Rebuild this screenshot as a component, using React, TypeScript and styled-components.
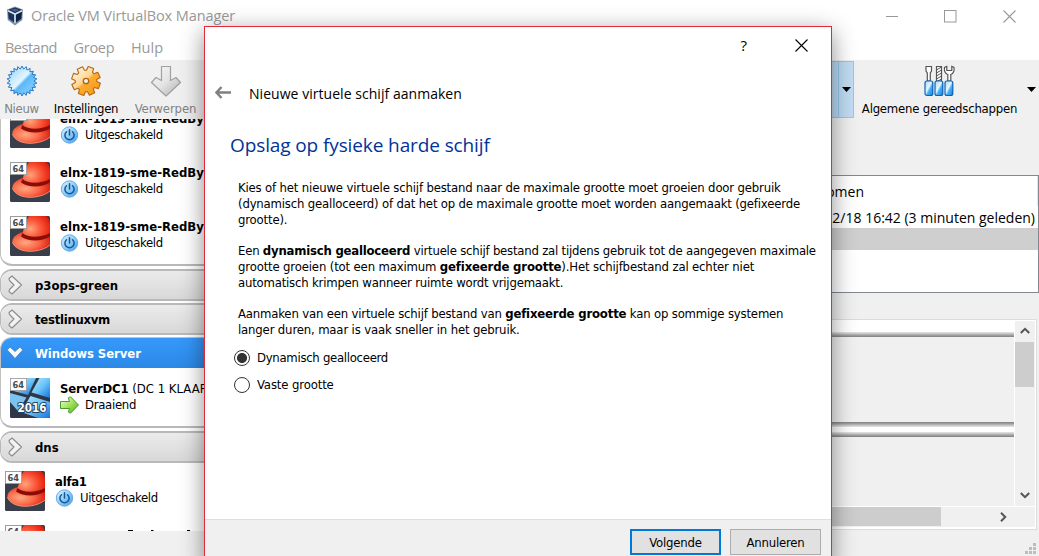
import React from "react";
import styled, { createGlobalStyle } from "styled-components";

const tahoma = `"DejaVu Sans Condensed", "DejaVu Sans", sans-serif`;
const segoe = `"Open Sans", "Noto Sans", sans-serif`;

const GlobalStyle = createGlobalStyle`
  * { box-sizing: border-box; }
  body { margin: 0; overflow: hidden; background: #f0f0f0; }
  svg { display: block; flex: none; }
`;

const Track = styled.span<{ $ls?: number }>`
  letter-spacing: ${(p) => p.$ls ?? 0}px;
  white-space: nowrap;
`;

const Desktop = styled.div`
  position: relative;
  display: flex;
  flex-direction: column;
  width: 1039px;
  height: 556px;
  overflow: hidden;
  background: #f0f0f0;
  font: 13px/16px ${tahoma};
  color: #000;
`;

const TitleBar = styled.header`
  display: flex;
  align-items: center;
  height: 38px;
  padding: 0 23px 6px 6px;
  background: #fff;
  color: #999;
  font: 14.5px/20px ${segoe};
`;

const WindowTitle = styled.div`
  flex: 1;
  padding-left: 7px;
`;

const Controls = styled.div`
  display: flex;
  gap: 46px;
`;

const MenuBar = styled.nav`
  display: flex;
  gap: 16.5px;
  height: 22px;
  padding-left: 5px;
  background: #fff;
  color: #999;
  font: 14.5px/20px ${segoe};
`;

const ToolBar = styled.div`
  display: flex;
  height: 59px;
  background: #f0f0f0;
`;

const Tool = styled.div<{ $w: number; $muted?: boolean }>`
  display: flex;
  flex-direction: column;
  align-items: center;
  gap: 4px;
  width: ${(p) => p.$w}px;
  padding-top: 5px;
  color: ${(p) => (p.$muted ? "#838383" : "#000")};
`;

const RightTools = styled.div`
  display: flex;
  margin-left: auto;
`;

const ActiveTool = styled.div`
  display: flex;
  align-items: center;
  justify-content: flex-end;
  width: 60px;
  height: 57px;
  margin: 1px 1px 0 0;
  border: 1px solid #90c8f6;
  background: #c0dcf3;
`;

const DropCell = styled.div`
  display: flex;
  align-items: center;
  justify-content: center;
  width: 15px;
  height: 100%;
  border-left: 1px solid #90c8f6;
`;

const Drop = styled.div`
  display: flex;
  align-items: center;
  justify-content: center;
  width: 15px;
`;

const Body = styled.div`
  display: flex;
  flex: 1;
  min-height: 0;
`;

const Sidebar = styled.aside`
  display: flex;
  flex-direction: column;
  width: 300px;
  height: 412px;
  overflow: hidden;
  background: #fff;
`;

const Group = styled.section<{ $h: number }>`
  flex: none;
  height: ${(p) => p.$h}px;
  margin-bottom: 3px;
  border: 1px solid #c2c2c2;
  border-bottom: 2px solid #b9b9b9;
  border-radius: 12px 0 0 12px;
  overflow: hidden;
  background: #fff;
`;

const PartialGroup = styled(Group)`
  display: flex;
  flex-direction: column;
  justify-content: flex-end;
  border-top: 0;
  border-radius: 0 0 0 12px;
  padding-bottom: 1px;
`;

const GroupHeader = styled.div<{ $active?: boolean }>`
  display: flex;
  align-items: center;
  flex: none;
  height: ${(p) => (p.$active ? 30 : 28)}px;
  padding: 0 0 0 6px;
  background: ${(p) =>
    p.$active
      ? "linear-gradient(#3699fb, #2b88e6)"
      : "linear-gradient(#ebebeb, #d8d8d8)"};
  color: ${(p) => (p.$active ? "#fff" : "#000")};
  font-weight: bold;
`;

const ClosedGroup = styled.section`
  flex: none;
  height: 32px;
  margin-bottom: 2px;
  border: 2px solid #b9b9b9;
  border-left-width: 1px;
  border-radius: 12px 0 0 12px;
  overflow: hidden;
`;

const GroupName = styled.div<{ $ls?: number }>`
  padding: 1px 0 0 12px;
  letter-spacing: ${(p) => p.$ls ?? 0}px;
`;

const MachineRow = styled.div<{ $indent: number; $top?: number }>`
  display: flex;
  flex: none;
  gap: 10px;
  height: 54px;
  padding: ${(p) => p.$top ?? 7}px 0 0 ${(p) => p.$indent}px;
`;

const MachineInfo = styled.div`
  padding-top: 3px;
  white-space: nowrap;
`;

const MachineName = styled.div`
  height: 15px;
`;

const MachineState = styled.div`
  display: flex;
  align-items: center;
  gap: 6px;
  height: 18px;
`;

const Details = styled.main`
  display: flex;
  flex-direction: column;
  flex: 1;
  padding-top: 56px;
`;

const Snapshots = styled.div`
  height: 118px;
  border: 1px solid #828790;
  background: #fff;
  font: 14px/26px ${segoe};
  text-align: right;
`;

const SnapHead = styled.div`
  height: 30px;
  padding: 3px 173px 0 0;
  border-right: 1px solid #e5e5e5;
`;

const SnapRow = styled.div<{ $selected?: boolean }>`
  height: 22px;
  padding-right: 3px;
  line-height: 24px;
  background: ${(p) => (p.$selected ? "#cfcfcf" : "#fff")};
`;

const Panel = styled.div`
  display: grid;
  grid-template-columns: 1fr 20px;
  grid-template-rows: 185px 20px;
  column-gap: 1px;
  row-gap: 1px;
  height: 211px;
  margin: 26px 2px 0 0;
  padding: 1px;
  border: 1px solid #dcdcdc;
  background: #fff;
`;

const View = styled.div`
  display: flex;
  flex-direction: column;
  gap: 85px;
  background: #f0f0f0;
`;

const bottomEdge = "linear-gradient(#e8e8e8, #c8c8c8 30%, #a0a0a0 65%, #808080) bottom / 100% 5px no-repeat,";
const topEdge = "linear-gradient(#808080, #a0a0a0 35%, #c8c8c8 70%, #e8e8e8) top / 100% 5px no-repeat,";

const Divider = styled.div<{ $h: number; $double?: boolean }>`
  height: ${(p) => p.$h}px;
  background: ${bottomEdge} ${(p) => (p.$double ? topEdge : "")} #fff;
`;

const VScroll = styled.div`
  display: flex;
  flex-direction: column;
  align-items: center;
  justify-content: space-between;
  background: #f0f0f0;
  padding: 5px 0 6px;
`;

const VThumb = styled.div`
  width: 19px;
  height: 45px;
  margin: 6px 1px auto 0;
  background: #cdcdcd;
`;

const HScroll = styled.div`
  display: flex;
  align-items: center;
  grid-column: 1 / 3;
  padding-right: 27px;
  background: #f0f0f0;
`;

const HThumb = styled.div`
  flex: 1;
  height: 19px;
  margin: 0 57px 1px 0;
  background: #cdcdcd;
`;

const GripCorner = styled.div`
  display: flex;
  justify-content: flex-end;
  padding: 13px 3px 0 0;
`;

const Dialog = styled.section`
  position: absolute;
  left: 204px;
  top: 26px;
  display: flex;
  flex-direction: column;
  width: 628px;
  height: 540px;
  border: 1px solid #e3283a;
  background: #fff;
  box-shadow: 0 6px 22px rgba(0, 0, 0, 0.45);
`;

const DialogControls = styled.div`
  display: flex;
  align-items: center;
  justify-content: flex-end;
  gap: 48px;
  height: 36px;
  padding-right: 23px;
  font: 500 15px/20px ${segoe};
`;

const DialogHeading = styled.div`
  display: flex;
  align-items: center;
  gap: 18px;
  height: 60px;
  padding: 2px 0 0 10px;
  font: 14px/20px ${segoe};
`;

const BackArrow = styled.svg`
  margin-bottom: 3px;
`;

const PageTitle = styled.h1`
  height: 44px;
  margin: 0;
  padding-left: 25px;
  color: #003399;
  font: 400 19px/44px ${segoe};
`;

const Copy = styled.div`
  padding: 13px 0 0 33px;
  line-height: 15.75px;
`;

const Paragraph = styled.p`
  margin: 0 0 15.75px;
`;

const Line = styled(Track)`
  display: block;
`;

const Choice = styled.label`
  display: flex;
  align-items: center;
  gap: 7px;
  height: 27px;
  padding-left: 29px;
`;

const Radio = styled.span<{ $on?: boolean }>`
  width: 16px;
  height: 16px;
  border: 1px solid #333;
  border-radius: 50%;
  background: ${(p) => (p.$on ? "radial-gradient(circle, #333 4.6px, #fff 5.4px)" : "#fff")};
`;

const Choices = styled.div`
  margin-top: -8.5px;
`;

const Footer = styled.footer`
  display: flex;
  justify-content: flex-end;
  gap: 9px;
  height: 46px;
  margin-top: auto;
  padding: 9px 10px 0 0;
  border-top: 1px solid #dfdfdf;
  background: #f0f0f0;
`;

const Button = styled.button<{ $primary?: boolean }>`
  width: 91px;
  height: 26px;
  padding: 1px 0 0;
  border: ${(p) => (p.$primary ? "2px solid #0078d7" : "1px solid #adadad")};
  background: #e1e1e1;
  color: #000;
  font: 13px/20px ${tahoma};
`;

const CloseGlyph = ({ color }: { color: string }) => (
  <svg width="13" height="13" viewBox="0 0 13 13">
    <path d="M.5 .5 12.5 12.5M12.5 .5 .5 12.5" stroke={color} strokeWidth="1.1" fill="none" />
  </svg>
);

const Triangle = () => (
  <svg width="9" height="5" viewBox="0 0 9 5">
    <path d="M0 0H9L4.5 5Z" />
  </svg>
);

const CubeLogo = () => (
  <svg width="18" height="20" viewBox="0 0 18 20">
    <path d="M1 3.5 9 .5 17 3.5 16.3 14 9 19.5 1.7 14Z" fill="#7e92a8" />
    <path d="M2.5 3.8 9 1.5 15.5 3.8 9 7Z" fill="#15294d" />
    <path d="M2 5.3 8 8.3V16.5L2.7 12.8Z" fill="#18325f" />
    <path d="M16 5.3 10 8.3V16.5L15.3 12.8Z" fill="#0e2142" />
    <path d="M2 4.8 9 8.2 16 4.8M9 8V17" stroke="#dbe5ee" strokeWidth="1.3" fill="none" />
    <path d="M4.5 3.9 9 2.4 13.5 3.9 9 5.8Z" fill="#3f5f8e" />
  </svg>
);

const burst = Array.from({ length: 44 }, (_, i) => {
  const r = i % 2 ? 12 : 15;
  const a = (i * Math.PI) / 22;
  return `${(16 + r * Math.sin(a)).toFixed(2)},${(16 - r * Math.cos(a)).toFixed(2)}`;
}).join(" ");

const NewIcon = () => (
  <svg width="32" height="32" viewBox="0 0 32 32">
    <defs>
      <linearGradient id="nw" x1="0" y1="0" x2="1" y2="1">
        <stop offset="0" stopColor="#8fd0ff" />
        <stop offset=".48" stopColor="#e4f6ff" />
        <stop offset=".55" stopColor="#5cb8fa" />
        <stop offset=".8" stopColor="#7accff" />
        <stop offset="1" stopColor="#3f9df0" />
      </linearGradient>
    </defs>
    <polygon points={burst} fill="url(#nw)" stroke="#2877c4" strokeWidth="1" />
  </svg>
);

const gear = Array.from({ length: 8 }, (_, i) => {
  const center = ((i * 45 + 20) * Math.PI) / 180;
  return [[-0.3, 10.8], [-0.2, 14.6], [0.2, 14.6], [0.3, 10.8]]
    .map(([d, r]) => `${(16 + r * Math.sin(center + d)).toFixed(2)},${(16 - r * Math.cos(center + d)).toFixed(2)}`)
    .join(" ");
}).join(" ");

const GearIcon = () => (
  <svg width="32" height="32" viewBox="0 0 32 32">
    <defs>
      <linearGradient id="gr" gradientUnits="userSpaceOnUse" x1="4" y1="3" x2="27" y2="29">
        <stop offset="0" stopColor="#fffaf0" />
        <stop offset=".46" stopColor="#ffd591" />
        <stop offset=".54" stopColor="#fdab30" />
        <stop offset="1" stopColor="#f59a18" />
      </linearGradient>
    </defs>
    <polygon points={gear} fill="url(#gr)" stroke="#b5660f" strokeWidth="1.1" strokeLinejoin="round" />
    <circle cx="16" cy="16" r="2.7" fill="#f5efe4" stroke="#a8651a" strokeWidth="1.3" />
  </svg>
);

const DiscardIcon = () => (
  <svg width="32" height="32" viewBox="0 0 32 32">
    <defs>
      <linearGradient id="dc" x1="0" y1="0" x2="1" y2="1">
        <stop offset="0" stopColor="#fafafa" />
        <stop offset=".5" stopColor="#e4e4e4" />
        <stop offset="1" stopColor="#b0b0b0" />
      </linearGradient>
    </defs>
    <path d="M11.5 1.500H20.500V15.500L26 12.500 30.500 17.500 16 31 1.500 17.500 6 12.500 11.500 15.500Z" fill="url(#dc)" stroke="#a0a0a0" strokeWidth="1.2" strokeLinejoin="round" />
  </svg>
);

const ToolsIcon = () => (
  <svg width="32" height="32" viewBox="0 0 32 32">
    <defs>
      <linearGradient id="tl" x1="0" y1="0" x2="1" y2="1">
        <stop offset="0" stopColor="#9fd8ff" />
        <stop offset=".45" stopColor="#e4f6ff" />
        <stop offset=".6" stopColor="#45b1f8" />
        <stop offset="1" stopColor="#1d84dc" />
      </linearGradient>
    </defs>
    <g fill="#fff" stroke="#555" strokeWidth="1.2">
      <path d="M2 1.500H7.500V6L6.300 8V16H3.300V8L2 6Z" />
      <path d="M12.500 1.500H17.500V16H12.500Z" />
      <path d="M20.500 2.500C20 6 21 8.500 23.800 9.500V16H26.800V9.500C29.500 8.500 30.500 6 30 2.500L27.800 1.500V5.500H22.800V1.500Z" />
      <path d="M12.500 5 17.500 2M12.500 8 17.500 5M12.500 11 17.500 8M12.500 14 17.500 11M14 16 17.500 14" strokeWidth="1" />
    </g>
    {[1, 11, 21].map((x) => (
      <rect key={x} x={x} y="16" width="7.8" height="14.5" rx="2" fill="url(#tl)" stroke="#0f63b5" strokeWidth="1.2" />
    ))}
  </svg>
);

const Badge64 = ({ label = true }: { label?: boolean }) => (
  <g>
    <rect x=".4" y=".4" width="16.2" height="12.2" fill="#fdfdfd" stroke="#999" strokeWidth=".8" />
    {label && (
      <text x="8.3" y="10" textAnchor="middle" fontFamily="DejaVu Sans" fontWeight="bold" fontSize="9" fill="#454b57" textLength="11.5" lengthAdjust="spacingAndGlyphs">64</text>
    )}
  </g>
);

const HatIcon = ({ label }: { label?: boolean }) => (
  <svg width="40" height="40" viewBox="0 0 40 40">
    <defs>
      <radialGradient id="ht" cx=".3" cy=".55" r=".8">
        <stop offset="0" stopColor="#ffa47c" />
        <stop offset=".45" stopColor="#fb5a3c" />
        <stop offset="1" stopColor="#df1405" />
      </radialGradient>
      <radialGradient id="br" cx=".35" cy=".55" r=".7">
        <stop offset="0" stopColor="#ffa882" />
        <stop offset=".5" stopColor="#fb6a4a" />
        <stop offset="1" stopColor="#d81b0b" />
      </radialGradient>
    </defs>
    <rect width="40" height="40" rx="1.5" fill="#393e4b" />
    <path d="M13 16C6 18 2 22 2.500 26 4 32 12 35.500 21 35.300 29 35 36 32.500 40 29V18Z" fill="url(#br)" />
    <path d="M2.500 26C4 32 12 35.500 21 35.300 29 35 36 32.500 40 29" fill="none" stroke="#f9957a" strokeWidth=".9" />
    <path d="M12 19C14 13 16 4 19 0H36C38.500 2 39.500 4 40 7V20C32 25 19 25 12 19Z" fill="url(#ht)" />
    <path d="M12.500 17C18 21.800 30 22.300 40 17V20.500C31 26 18 25.500 11 20.500Z" fill="#8b0d08" />
    <Badge64 label={label} />
  </svg>
);

const WindowsServerIcon = () => (
  <svg width="40" height="40" viewBox="0 0 40 40">
    <defs>
      <linearGradient id="ws" x1="0" y1="0" x2="1" y2="1">
        <stop offset="0" stopColor="#b9e8ff" />
        <stop offset=".5" stopColor="#6cc4f7" />
        <stop offset="1" stopColor="#0f74e2" />
      </linearGradient>
    </defs>
    <rect width="40" height="40" rx="1.5" fill="#2f3747" />
    <path d="M0 0H26L18 17 0 12Z" fill="url(#ws)" />
    <path d="M29.500 0H40V20L21.500 14.500Z" fill="url(#ws)" />
    <path d="M0 15 16.500 19.500 8 33 0 24Z" fill="#7cc4f0" />
    <path d="M20.500 18 40 24V40H28L11 34Z" fill="url(#ws)" />
    <text x="22" y="34" textAnchor="middle" fontFamily="DejaVu Sans" fontWeight="bold" fontSize="12" fill="#fff" stroke="#26405f" strokeWidth="2" paintOrder="stroke" textLength="29" lengthAdjust="spacingAndGlyphs">2016</text>
    <Badge64 />
  </svg>
);

const PowerIcon = () => (
  <svg width="19" height="18" viewBox="0 0 19 18">
    <defs>
      <linearGradient id="pw" x1="0" y1="0" x2="1" y2="1">
        <stop offset="0" stopColor="#e2f4ff" />
        <stop offset=".5" stopColor="#8ccefc" />
        <stop offset="1" stopColor="#3c9df2" />
      </linearGradient>
    </defs>
    <circle cx="9.5" cy="9" r="8.2" fill="url(#pw)" stroke="#5ba5de" strokeWidth=".9" />
    <path d="M6.500 5.700A4.600 4.600 0 1 0 12.500 5.700M9.500 3.800V9" stroke="#1c5590" strokeWidth="1.5" fill="none" strokeLinecap="round" />
  </svg>
);

const RunIcon = () => (
  <svg width="19" height="18" viewBox="0 0 19 18">
    <defs>
      <linearGradient id="rn" x1="0" y1="0" x2="1" y2="1">
        <stop offset="0" stopColor="#f2ffe4" />
        <stop offset=".5" stopColor="#a3e35c" />
        <stop offset="1" stopColor="#42b019" />
      </linearGradient>
    </defs>
    <path d="M.5 5.500H9.500L8.300 1.800 10.500 .8 18.500 9 10.500 17.200 8.300 16 9.500 12.500H.5Z" fill="url(#rn)" stroke="#4d9a2c" strokeWidth="1" strokeLinejoin="round" />
  </svg>
);

const ChevronRight = () => (
  <svg width="16" height="20" viewBox="0 0 16 20">
    <path d="M5 1 14.500 10 5 19 2 16.500 2.500 14.500 7 10 2.500 5.500 2 3.500Z" fill="#f3f3f3" stroke="#8c8c8c" strokeWidth="1.1" strokeLinejoin="round" />
  </svg>
);

const ChevronDown = () => (
  <svg width="16" height="14" viewBox="0 0 16 14">
    <path d="M.3 4 3 1 8 5.500 13 1 15.700 4 8 12.500Z" fill="#f5f8fc" stroke="#4a7fb4" strokeWidth=".8" strokeLinejoin="round" />
  </svg>
);

const ScrollArrow = ({ turn }: { turn: number }) => (
  <svg width="10" height="10" viewBox="0 0 10 10">
    <path d="M.8 7 5 2.800 9.200 7" fill="none" stroke="#555" strokeWidth="2" transform={`rotate(${turn} 5 5)`} />
  </svg>
);

const SizeGrip = () => (
  <svg width="11" height="12" viewBox="0 0 11 12" fill="#bdbdbd">
    {[[8, 0], [4, 4], [8, 4], [0, 8], [4, 8], [8, 8]].map(([x, y]) => (
      <rect key={`${x}-${y}`} x={x} y={y} width="3" height="3" />
    ))}
  </svg>
);

/* Tops of the letters of a name that is scrolled out below the list. */
const NameTops = () => (
  <svg width="140" height="6" viewBox="0 0 140 6">
    <path d="M73 5.500H78M96 5.500H98.500M132 5.500H135" stroke="#000" />
  </svg>
);

type MachineProps = { name: string; indent: number; top?: number; ls?: number; badgeLabel?: boolean };

const StoppedMachine = ({ name, indent, top, ls, badgeLabel }: MachineProps) => (
  <MachineRow $indent={indent} $top={top}>
    <HatIcon label={badgeLabel} />
    <MachineInfo>
      <MachineName><Track as="b" $ls={ls}>{name}</Track></MachineName>
      <MachineState><PowerIcon /><Track $ls={-0.35}>Uitgeschakeld</Track></MachineState>
    </MachineInfo>
  </MachineRow>
);

const CollapsedGroup = ({ name, ls }: { name: string; ls?: number }) => (
  <ClosedGroup>
    <GroupHeader><ChevronRight /><GroupName $ls={ls}>{name}</GroupName></GroupHeader>
  </ClosedGroup>
);

export default function App() {
  return (
    <Desktop>
      <GlobalStyle />
      <TitleBar>
        <CubeLogo />
        <WindowTitle><Track $ls={-0.09}>Oracle VM VirtualBox Manager</Track></WindowTitle>
        <Controls>
          <svg width="12" height="13"><path d="M0 6.500H12" stroke="#999" /></svg>
          <svg width="13" height="13"><rect x=".5" y=".5" width="11.5" height="11.5" fill="none" stroke="#999" /></svg>
          <CloseGlyph color="#999" />
        </Controls>
      </TitleBar>
      <MenuBar>
        <Track $ls={-0.5}>Bestand</Track><Track $ls={-0.25}>Groep</Track><Track>Hulp</Track>
      </MenuBar>
      <ToolBar>
        <Tool $w={43} $muted><NewIcon /><Track $ls={-0.3}>Nieuw</Track></Tool>
        <Tool $w={86}><GearIcon /><Track $ls={-0.3}>Instellingen</Track></Tool>
        <Tool $w={73} $muted><DiscardIcon /><Track $ls={-0.1}>Verwerpen</Track></Tool>
        <RightTools>
          <ActiveTool><DropCell><Triangle /></DropCell></ActiveTool>
          <Tool $w={169}><ToolsIcon /><Track $ls={-0.22}>Algemene gereedschappen</Track></Tool>
          <Drop><Triangle /></Drop>
        </RightTools>
      </ToolBar>
      <Body>
        <Sidebar>
          <PartialGroup $h={147}>
            <StoppedMachine name="elnx-1819-sme-RedByte" indent={9} badgeLabel={false} />
            <StoppedMachine name="elnx-1819-sme-RedByte" indent={9} />
            <StoppedMachine name="elnx-1819-sme-RedByte" indent={9} />
          </PartialGroup>
          <CollapsedGroup name="p3ops-green" />
          <CollapsedGroup name="testlinuxvm" ls={-0.28} />
          <Group $h={91}>
            <GroupHeader $active><ChevronDown /><GroupName $ls={-0.08}>Windows Server</GroupName></GroupHeader>
            <MachineRow $indent={9} $top={10}>
              <WindowsServerIcon />
              <MachineInfo>
                <MachineName><Track as="b" $ls={-0.15}>ServerDC1</Track> (DC 1 KLAAR)</MachineName>
                <MachineState><RunIcon /><Track $ls={-0.3}>Draaiend</Track></MachineState>
              </MachineInfo>
            </MachineRow>
          </Group>
          <CollapsedGroup name="dns" />
          <StoppedMachine name="alfa1" indent={5} top={6} ls={-0.25} />
          <MachineRow $indent={5} $top={6}><HatIcon /><NameTops /></MachineRow>
        </Sidebar>
        <Details>
          <Snapshots>
            <SnapHead><Track>Genomen</Track></SnapHead>
            <SnapRow><Track>2/12/18 16:42 (3 minuten geleden)</Track></SnapRow>
            <SnapRow $selected />
          </Snapshots>
          <Panel>
            <View>
              <Divider $h={16} />
              <Divider $h={15} $double />
            </View>
            <VScroll><ScrollArrow turn={0} /><VThumb /><ScrollArrow turn={180} /></VScroll>
            <HScroll><HThumb /><ScrollArrow turn={90} /></HScroll>
          </Panel>
          <GripCorner><SizeGrip /></GripCorner>
        </Details>
      </Body>
      <Dialog>
        <DialogControls><span>?</span><CloseGlyph color="#000" /></DialogControls>
        <DialogHeading>
          <BackArrow width="16" height="13" viewBox="0 0 16 13">
            <path d="M6.500 1 1.500 6.500 6.500 12M1.500 6.500H16" fill="none" stroke="#808080" strokeWidth="2.4" />
          </BackArrow>
          <Track $ls={0.04}>Nieuwe virtuele schijf aanmaken</Track>
        </DialogHeading>
        <PageTitle><Track $ls={-0.11}>Opslag op fysieke harde schijf</Track></PageTitle>
        <Copy>
          <Paragraph>
            <Line $ls={-0.165}>Kies of het nieuwe virtuele schijf bestand naar de maximale grootte moet groeien door gebruik</Line>
            <Line $ls={-0.18}>(dynamisch gealloceerd) of dat het op de maximale grootte moet worden aangemaakt (gefixeerde</Line>
            <Line $ls={-0.17}>grootte).</Line>
          </Paragraph>
          <Paragraph>
            <Line $ls={-0.215}>Een <b>dynamisch gealloceerd</b> virtuele schijf bestand zal tijdens gebruik tot de aangegeven maximale</Line>
            <Line $ls={-0.155}>grootte groeien (tot een maximum <b>gefixeerde grootte</b>).Het schijfbestand zal echter niet</Line>
            <Line $ls={-0.2}>automatisch krimpen wanneer ruimte wordt vrijgemaakt.</Line>
          </Paragraph>
          <Paragraph>
            <Line $ls={-0.18}>Aanmaken van een virtuele schijf bestand van <b>gefixeerde grootte</b> kan op sommige systemen</Line>
            <Line $ls={-0.16}>langer duren, maar is vaak sneller in het gebruik.</Line>
          </Paragraph>
        </Copy>
        <Choices>
          <Choice><Radio $on /><Track $ls={-0.29}>Dynamisch gealloceerd</Track></Choice>
          <Choice><Radio /><Track $ls={-0.13}>Vaste grootte</Track></Choice>
        </Choices>
        <Footer>
          <Button $primary><Track $ls={-0.2}>Volgende</Track></Button>
          <Button><Track $ls={-0.2}>Annuleren</Track></Button>
        </Footer>
      </Dialog>
    </Desktop>
  );
}
